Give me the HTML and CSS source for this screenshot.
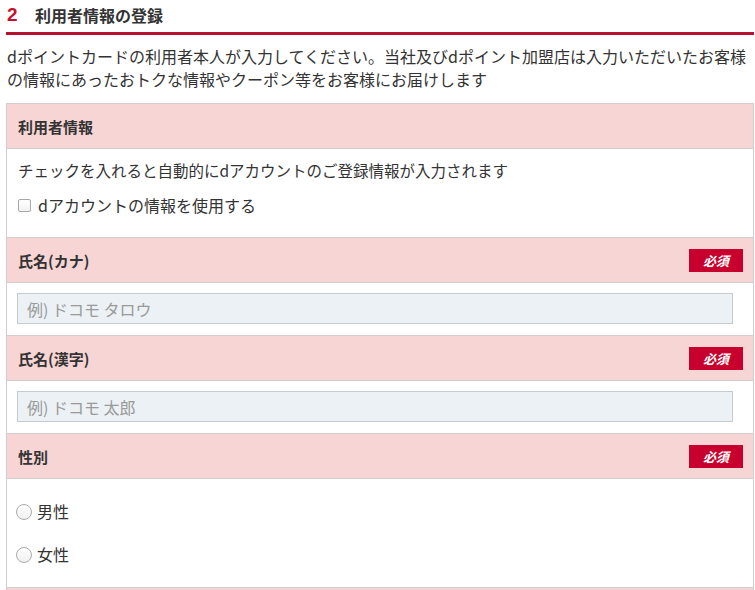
FILE: index.html
```html
<!DOCTYPE html>
<html lang="ja">
<head>
<meta charset="utf-8">
<link rel="stylesheet" href="styles.css">
</head>
<body>
<div class="page">
  <h2 class="title"><span class="num">2</span><span class="title-text">利用者情報の登録</span></h2>
  <p class="lead">dポイントカードの利用者本人が入力してください。当社及びdポイント加盟店は入力いただいたお客様の情報にあったおトクな情報やクーポン等をお客様にお届けします</p>
  <div class="box">
    <div class="head"><span class="label">利用者情報</span></div>
    <div class="sec sec-info">
      <p class="note">チェックを入れると自動的にdアカウントのご登録情報が入力されます</p>
      <label class="check"><input type="checkbox" class="cb"><span>dアカウントの情報を使用する</span></label>
    </div>
    <div class="head"><span class="label">氏名(カナ)</span><span class="badge">必須</span></div>
    <div class="sec sec-input"><input class="field" type="text" placeholder="例) ドコモ タロウ"></div>
    <div class="head"><span class="label">氏名(漢字)</span><span class="badge">必須</span></div>
    <div class="sec sec-input"><input class="field" type="text" placeholder="例) ドコモ 太郎"></div>
    <div class="head"><span class="label">性別</span><span class="badge">必須</span></div>
    <div class="sec sec-radio">
      <label class="radio"><input type="radio" name="sex" class="rb"><span>男性</span></label>
      <label class="radio"><input type="radio" name="sex" class="rb"><span>女性</span></label>
    </div>
    <div class="head head-last"></div>
  </div>
</div>
</body>
</html>
```

FILE: styles.css
```css
* { box-sizing: border-box; }
html, body {
  margin: 0;
  padding: 0;
  background: #fff;
}
body {
  font-family: "Noto Sans CJK JP", "Noto Sans", sans-serif;
  color: #333;
  font-size: 16px;
  overflow: hidden;
}
.page {
  padding: 0 1px 0 6px;
}
.title {
  margin: 0;
  height: 35px;
  display: flex;
  align-items: center;
  border-bottom: 3px solid #b8102f;
  padding: 0 0 3px 1px;
  font-weight: bold;
}
.num {
  color: #c8102e;
  font-family: "Liberation Sans", Arial, sans-serif;
  font-size: 19px;
  font-weight: bold;
  width: 28px;
}
.title-text {
  font-size: 16px;
  color: #333;
}
.lead {
  margin: 10px 0 12px 1px;
  font-size: 16px;
  line-height: 23px;
}
.box {
  border: 1px solid #d3cdcd;
  border-bottom: none;
}
.head {
  height: 45px;
  background: #f8d5d5;
  border-bottom: 1px solid #d3cdcd;
  display: flex;
  align-items: center;
  justify-content: space-between;
  padding: 0 10px 0 11px;
}
.head-last {
  height: 4px;
  border-bottom: none;
}
.label {
  font-weight: bold;
  font-size: 15px;
}
.badge {
  background: #c8002d;
  color: #fff;
  font-size: 13px;
  font-weight: bold;
  font-style: italic;
  width: 54px;
  height: 23px;
  display: flex;
  align-items: center;
  justify-content: center;
}
.sec {
  border-bottom: 1px solid #d3cdcd;
  background: #fff;
}
.sec-info {
  padding: 10px 11px 20px 11px;
  height: 89px;
}
.note {
  margin: 0;
  font-size: 15.5px;
  line-height: 23px;
}
.check {
  margin-top: 12px;
  display: flex;
  align-items: center;
  font-size: 16px;
  line-height: 23px;
}
.cb {
  appearance: none;
  -webkit-appearance: none;
  width: 13px;
  height: 13px;
  margin: 0 7px 0 0;
  border: 1px solid #a8a8a8;
  border-radius: 2px;
  background: linear-gradient(#fff, #f2f2f2);
}
.sec-input {
  height: 53px;
  padding: 10px 20px 10px 10px;
}
.field {
  display: block;
  width: 100%;
  height: 31px;
  border: 1px solid #c6cbcf;
  background: #ebf1f4;
  padding: 0 9px;
  font-family: "Noto Sans CJK JP", "Noto Sans", sans-serif;
  font-size: 16px;
  color: #333;
  outline: none;
}
.field::placeholder {
  color: #9a9a9a;
}
.sec-radio {
  height: 109px;
  padding: 21px 10px 0 9px;
  display: flex;
  flex-direction: column;
  gap: 20px;
}
.radio {
  display: flex;
  align-items: center;
  font-size: 16px;
  line-height: 23px;
}
.rb {
  appearance: none;
  -webkit-appearance: none;
  width: 16px;
  height: 16px;
  margin: 0 5px 0 0;
  border: 1px solid #aaa;
  border-radius: 50%;
  background: linear-gradient(#fff, #f0f0f0);
}
```
